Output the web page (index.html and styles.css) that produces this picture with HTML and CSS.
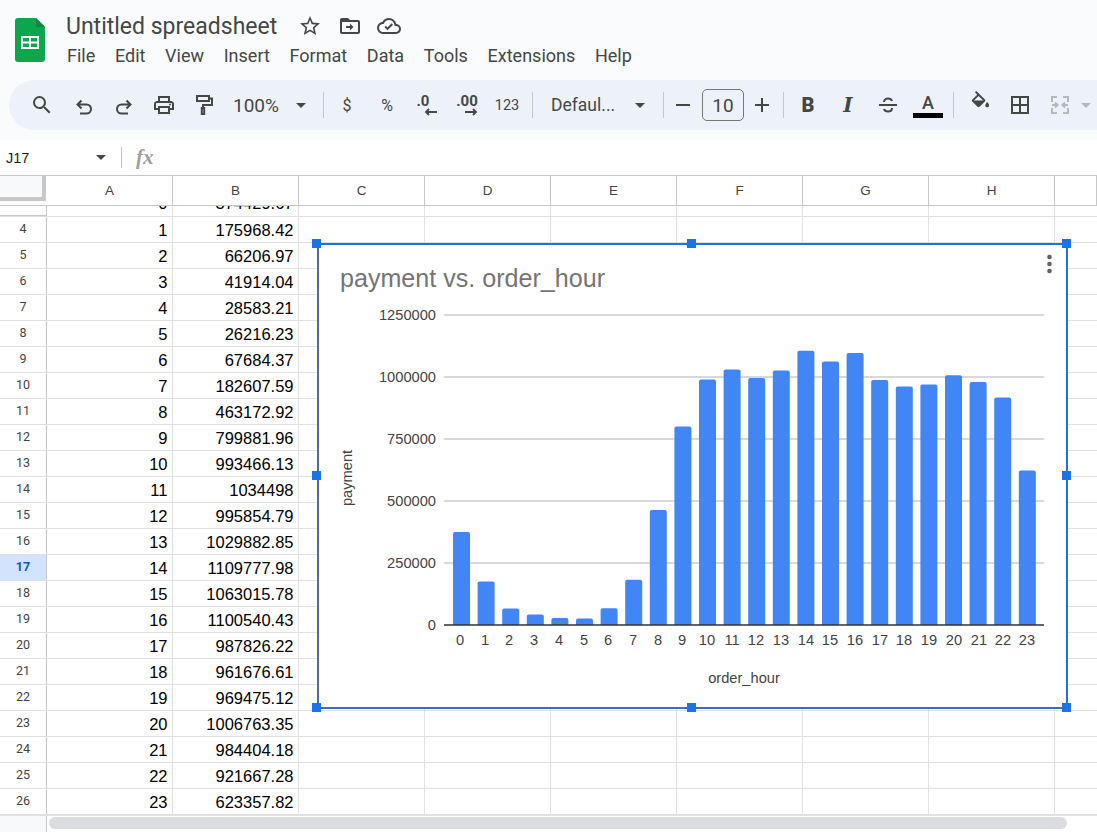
FILE: index.html
```html
<!DOCTYPE html>
<html lang="en">
<head>
  <meta charset="UTF-8" />
  <title>Untitled spreadsheet</title>
  <link rel="stylesheet" href="styles.css">
</head>
<body>
  <header class="top">
    <svg class="logo" viewBox="0 0 30 44" width="30" height="44">
      <path d="M3 0h18l9 9v32a3 3 0 0 1-3 3H3a3 3 0 0 1-3-3V3a3 3 0 0 1 3-3z" fill="#0ca74d"/>
      <path d="M21 0l9 9h-9z" fill="#0a8a3f"/>
      <path d="M6 18h18v13H6z" fill="#fff"/>
      <path d="M8 20h6v3.500H8zM16 20h6v3.500h-6zM8 25.500h6V29H8zM16 25.500h6V29h-6z" fill="#0ca74d"/>
    </svg>
    <div class="doc">
      <div class="title-row">
        <span class="doc-title">Untitled spreadsheet</span>
        <svg class="title-icon" viewBox="0 0 24 24"><path d="M22 9.240l-7.190-.62L12 2 9.190 8.630 2 9.240l5.460 4.730L5.820 21 12 17.270 18.180 21l-1.630-7.030L22 9.240zM12 15.400l-3.760 2.270 1-4.280-3.320-2.880 4.380-.38L12 6.100l1.710 4.040 4.380.38-3.320 2.880 1 4.280L12 15.400z"/></svg>
        <svg class="title-icon" viewBox="0 0 24 24"><path d="M20 6h-8l-2-2H4c-1.100 0-2 .9-2 2v12c0 1.100.9 2 2 2h16c1.100 0 2-.9 2-2V8c0-1.100-.9-2-2-2zm0 12H4V8h16v10z"/><path d="M12 9.500l3.500 3.500-3.500 3.500v-2.500H8v-2h4z"/></svg>
        <svg class="title-icon" viewBox="0 0 24 24"><path d="M19.350 10.040A7.490 7.490 0 0 0 12 4a7.490 7.490 0 0 0-6.650 4.040A5.994 5.994 0 0 0 0 14a6 6 0 0 0 6 6h13a5 5 0 0 0 5-5c0-2.640-2.050-4.780-4.650-4.960zM19 18H6c-2.210 0-4-1.790-4-4 0-2.050 1.530-3.760 3.560-3.970l1.070-.11.500-.95A5.469 5.469 0 0 1 12 6c2.620 0 4.880 1.860 5.390 4.430l.3 1.500 1.530.11A2.980 2.980 0 0 1 22 15c0 1.650-1.350 3-3 3z"/><path d="M10.500 16.200l-3-3 1.400-1.400 1.600 1.600 4.100-4.100 1.400 1.400z"/></svg>
      </div>
      <nav class="menu">
        <span>File</span><span>Edit</span><span>View</span><span>Insert</span><span>Format</span><span>Data</span><span>Tools</span><span>Extensions</span><span>Help</span>
      </nav>
    </div>
  </header>

  <div class="toolbar-wrap">
    <div class="toolbar">
      <span class="tool first"><svg viewBox="0 0 24 24"><path d="M15.500 14h-.79l-.28-.27A6.470 6.470 0 0 0 16 9.500 6.500 6.500 0 1 0 9.500 16c1.610 0 3.090-.59 4.230-1.570l.27.28v.79l5 4.990L20.490 19l-4.990-5zm-6 0C7.010 14 5 11.990 5 9.500S7.010 5 9.500 5 14 7.010 14 9.500 11.990 14 9.500 14z"/></svg></span>
      <span class="tool low"><svg viewBox="0 0 24 24" class="line"><path d="M9.500 5.500L5.500 9.500l4 4M5.500 9.500h9a4.500 4.500 0 0 1 0 9H8"/></svg></span>
      <span class="tool low"><svg viewBox="0 0 24 24" class="line"><path d="M14.500 5.500l4 4-4 4M18.500 9.500h-9a4.500 4.500 0 0 0 0 9H16"/></svg></span>
      <span class="tool"><svg viewBox="0 0 24 24"><path d="M19 8h-1V3H6v5H5c-1.660 0-3 1.340-3 3v6h4v4h12v-4h4v-6c0-1.660-1.340-3-3-3zM8 5h8v3H8V5zm8 12v2H8v-4h8v2zm2-2v-2H6v2H4v-4c0-.55.45-1 1-1h14c.55 0 1 .45 1 1v4h-2z"/><circle cx="18" cy="11.500" r="1"/></svg></span>
      <span class="tool"><svg viewBox="0 0 24 24" class="line"><path d="M5 3h12v5H5zM17 5.500h3V12h-9v3"/><path d="M9.800 15h2.400v6H9.800z"/></svg></span>
      <span class="select zoom-select"><span>100%</span><i class="caret"></i></span>
      <i class="sep"></i>
      <span class="tool text dollar">$</span>
      <span class="tool text">%</span>
      <span class="tool decimal dec-less"><b>.0</b><svg viewBox="0 0 14 8" class="line thin"><path d="M13 4H2M5 1L2 4l3 3"/></svg></span>
      <span class="tool decimal"><b>.00</b><svg viewBox="0 0 14 8" class="line thin"><path d="M1 4h11M9 1l3 3-3 3"/></svg></span>
      <span class="tool text small">123</span>
      <i class="sep"></i>
      <span class="select font-select"><span>Defaul...</span><i class="caret"></i></span>
      <i class="sep"></i>
      <span class="tool narrow"><i class="dash"></i></span>
      <span class="size-box">10</span>
      <span class="tool narrow"><i class="dash"></i><i class="dash upright"></i></span>
      <i class="sep wide"></i>
      <span class="tool glyph-b">B</span>
      <span class="tool glyph-i">I</span>
      <span class="tool"><svg viewBox="0 0 24 24" class="line"><path d="M8 9c0-2 1.800-3.500 4-3.500s3.500 1 4 2.500M16 15c0 2.200-1.800 3.500-4 3.500S8.500 17.500 8 16M3 12h18"/></svg></span>
      <span class="tool color-a"><span>A</span><i class="swatch black"></i></span>
      <i class="sep tight"></i>
      <span class="tool bucket"><svg viewBox="0 0 24 24"><path fill-rule="evenodd" d="M16.560 8.940L7.620 0 6.210 1.410l2.380 2.380-5.150 5.150c-.59.59-.59 1.540 0 2.120l5.500 5.500c.29.29.68.44 1.060.44s.77-.15 1.060-.44l5.500-5.500c.59-.58.59-1.530 0-2.120zM5.210 10L10 5.210 14.790 10H5.210z"/><path d="M19 11.500s-2 2.170-2 3.500c0 1.100.9 2 2 2s2-.9 2-2c0-1.330-2-3.500-2-3.500z"/></svg><i class="swatch white"></i></span>
      <span class="tool"><svg viewBox="0 0 24 24"><path d="M3 3v18h18V3H3zm8 16H5v-6h6v6zm0-8H5V5h6v6zm8 8h-6v-6h6v6zm0-8h-6V5h6v6z"/></svg></span>
      <span class="tool off"><svg viewBox="0 0 24 24" class="line"><path d="M9 4H4v5M4 15v5h5M15 4h5v5M20 15v5h-5M4 12h5M7 9.500L9.500 12 7 14.500M20 12h-5M17 9.500L14.500 12l2.500 2.500"/></svg></span>
      <i class="caret off-caret"></i>
    </div>
  </div>

  <div class="formula-bar">
    <span class="name-box">J17</span><i class="caret"></i>
    <i class="fx-sep"></i>
    <span class="fx">fx</span>
  </div>

  <main class="sheet">
    <div class="col-heads">
      <div class="corner"></div>
      <div class="col-head">A</div><div class="col-head">B</div><div class="col-head">C</div><div class="col-head">D</div><div class="col-head">E</div><div class="col-head">F</div><div class="col-head">G</div><div class="col-head">H</div><div class="col-head"></div>
    </div>

    <div class="row clipped"><div class="rh">3</div><div class="cell">0</div><div class="cell">374429.67</div><div class="rest"></div></div>
    <div class="row"><div class="rh">4</div><div class="cell">1</div><div class="cell">175968.42</div><div class="rest"></div></div>
    <div class="row"><div class="rh">5</div><div class="cell">2</div><div class="cell">66206.97</div><div class="rest"></div></div>
    <div class="row"><div class="rh">6</div><div class="cell">3</div><div class="cell">41914.04</div><div class="rest"></div></div>
    <div class="row"><div class="rh">7</div><div class="cell">4</div><div class="cell">28583.21</div><div class="rest"></div></div>
    <div class="row"><div class="rh">8</div><div class="cell">5</div><div class="cell">26216.23</div><div class="rest"></div></div>
    <div class="row"><div class="rh">9</div><div class="cell">6</div><div class="cell">67684.37</div><div class="rest"></div></div>
    <div class="row"><div class="rh">10</div><div class="cell">7</div><div class="cell">182607.59</div><div class="rest"></div></div>
    <div class="row"><div class="rh">11</div><div class="cell">8</div><div class="cell">463172.92</div><div class="rest"></div></div>
    <div class="row"><div class="rh">12</div><div class="cell">9</div><div class="cell">799881.96</div><div class="rest"></div></div>
    <div class="row"><div class="rh">13</div><div class="cell">10</div><div class="cell">993466.13</div><div class="rest"></div></div>
    <div class="row"><div class="rh">14</div><div class="cell">11</div><div class="cell">1034498</div><div class="rest"></div></div>
    <div class="row"><div class="rh">15</div><div class="cell">12</div><div class="cell">995854.79</div><div class="rest"></div></div>
    <div class="row"><div class="rh">16</div><div class="cell">13</div><div class="cell">1029882.85</div><div class="rest"></div></div>
    <div class="row"><div class="rh active">17</div><div class="cell">14</div><div class="cell">1109777.98</div><div class="rest"></div></div>
    <div class="row"><div class="rh">18</div><div class="cell">15</div><div class="cell">1063015.78</div><div class="rest"></div></div>
    <div class="row"><div class="rh">19</div><div class="cell">16</div><div class="cell">1100540.43</div><div class="rest"></div></div>
    <div class="row"><div class="rh">20</div><div class="cell">17</div><div class="cell">987826.22</div><div class="rest"></div></div>
    <div class="row"><div class="rh">21</div><div class="cell">18</div><div class="cell">961676.61</div><div class="rest"></div></div>
    <div class="row"><div class="rh">22</div><div class="cell">19</div><div class="cell">969475.12</div><div class="rest"></div></div>
    <div class="row"><div class="rh">23</div><div class="cell">20</div><div class="cell">1006763.35</div><div class="rest"></div></div>
    <div class="row"><div class="rh">24</div><div class="cell">21</div><div class="cell">984404.18</div><div class="rest"></div></div>
    <div class="row"><div class="rh">25</div><div class="cell">22</div><div class="cell">921667.28</div><div class="rest"></div></div>
    <div class="row"><div class="rh">26</div><div class="cell">23</div><div class="cell">623357.82</div><div class="rest"></div></div>

    <div class="scroll-row">
      <div class="scroll-corner"></div>
      <div class="thumb"></div>
    </div>

    <!-- chart floats over the grid -->
    <div class="chart">
      <svg class="chart-svg" viewBox="317 243 751 466" width="751" height="466">
        <defs><clipPath id="plot"><rect x="440" y="300" width="610" height="325"/></clipPath></defs>
        <text class="chart-title" x="340" y="287">payment vs. order_hour</text>
        <g class="grid">
          <path d="M444 315H1044M444 377H1044M444 439H1044M444 501H1044M444 563H1044"/>
        </g>
        <g class="ylabels">
          <text x="436" y="320">1250000</text>
          <text x="436" y="382">1000000</text>
          <text x="436" y="444">750000</text>
          <text x="436" y="506">500000</text>
          <text x="436" y="568">250000</text>
          <text x="436" y="630">0</text>
        </g>
        <g class="bars" clip-path="url(#plot)">
          <rect x="453" y="532" width="17" height="95"/>
          <rect x="477.600" y="581.400" width="17" height="46"/>
          <rect x="502.200" y="608.600" width="17" height="19"/>
          <rect x="526.800" y="614.600" width="17" height="13"/>
          <rect x="551.400" y="617.900" width="17" height="10"/>
          <rect x="576" y="618.500" width="17" height="9"/>
          <rect x="600.600" y="608.200" width="17" height="19"/>
          <rect x="625.200" y="579.700" width="17" height="48"/>
          <rect x="649.800" y="510.100" width="17" height="117"/>
          <rect x="674.400" y="426.600" width="17" height="201"/>
          <rect x="699" y="379.600" width="17" height="248"/>
          <rect x="723.600" y="369.400" width="17" height="258"/>
          <rect x="748.200" y="378" width="17" height="249"/>
          <rect x="772.800" y="370.600" width="17" height="257"/>
          <rect x="797.400" y="350.800" width="17" height="277"/>
          <rect x="822" y="361.400" width="17" height="266"/>
          <rect x="846.600" y="353.100" width="17" height="274"/>
          <rect x="871.200" y="380" width="17" height="247"/>
          <rect x="895.800" y="386.500" width="17" height="241"/>
          <rect x="920.400" y="384.600" width="17" height="243"/>
          <rect x="945" y="375.300" width="17" height="252"/>
          <rect x="969.600" y="381.900" width="17" height="246"/>
          <rect x="994.200" y="397.400" width="17" height="230"/>
          <rect x="1018.800" y="470.400" width="17" height="157"/>
        </g>
        <path class="baseline" d="M444 625H1044"/>
        <g class="xlabels">
          <text x="460" y="645">0</text><text x="485" y="645">1</text><text x="509" y="645">2</text><text x="534" y="645">3</text>
          <text x="559" y="645">4</text><text x="584" y="645">5</text><text x="608" y="645">6</text><text x="633" y="645">7</text>
          <text x="658" y="645">8</text><text x="682" y="645">9</text><text x="707" y="645">10</text><text x="732" y="645">11</text>
          <text x="756" y="645">12</text><text x="781" y="645">13</text><text x="806" y="645">14</text><text x="830" y="645">15</text>
          <text x="855" y="645">16</text><text x="880" y="645">17</text><text x="904" y="645">18</text><text x="929" y="645">19</text>
          <text x="954" y="645">20</text><text x="979" y="645">21</text><text x="1003" y="645">22</text><text x="1027" y="645">23</text>
          <text x="744" y="683">order_hour</text>
          <text transform="translate(352 478) rotate(-90)">payment</text>
        </g>
        <g class="kebab"><circle cx="1049.500" cy="257" r="2.300"/><circle cx="1049.500" cy="264" r="2.300"/><circle cx="1049.500" cy="271" r="2.300"/></g>
      </svg>
      <i class="handle h-tl"></i><i class="handle h-tc"></i><i class="handle h-tr"></i>
      <i class="handle h-ml"></i><i class="handle h-mr"></i>
      <i class="handle h-bl"></i><i class="handle h-bc"></i><i class="handle h-br"></i>
    </div>
  </main>
</body>
</html>
```

FILE: styles.css
```css
* {
  margin: 0;
  padding: 0;
  box-sizing: border-box;
}

html, body {
  height: 100%;
  overflow: hidden;
}

body {
  font-family: Roboto, 'Liberation Sans', sans-serif;
  color: #444746;
  background: #fff;
}

i { display: block; font-style: normal; }

/* header */
.top {
  height: 80px;
  background: #f9fbfd;
  display: flex;
  padding: 18px 0 0 15px;
}

.logo { flex: none; }

.doc {
  margin-left: 21px;
  margin-top: -7px;
}

.title-row {
  display: flex;
  align-items: center;
  height: 30px;
}

.doc-title {
  font-size: 23px;
  width: 232px;
  white-space: nowrap;
}

.title-icon {
  width: 24px;
  height: 24px;
  margin-right: 15.500px;
  fill: #444746;
}

.menu {
  display: flex;
  gap: 19.700px;
  font-size: 18px;
  margin-top: 1px;
  height: 26px;
  align-items: center;
  padding-left: 1px;
}

/* toolbar */
.toolbar-wrap {
  background: #f9fbfd;
  padding-left: 9px;
  height: 60px;
}

.toolbar {
  height: 50px;
  background: #edf2fa;
  border-radius: 25px 0 0 25px;
  display: flex;
  align-items: center;
  padding-left: 13px;
  overflow: hidden;
}

.tool {
  flex: none;
  width: 40px;
  height: 40px;
  display: flex;
  align-items: center;
  justify-content: center;
  position: relative;
}

.tool.first { margin-right: 2px; }
.tool.low svg { margin-top: 3px; }
.tool.narrow { width: 32px; }

.tool svg {
  width: 24px;
  height: 24px;
  fill: #444746;
}

.tool svg.line {
  fill: none;
  stroke: #444746;
  stroke-width: 2;
}

.tool.off svg.line { stroke: #b5b7b9; }

.tool.text { font-size: 16px; }
.tool.text.small { font-size: 14.500px; }

.decimal { flex-direction: column; }

.decimal b {
  font-size: 15px;
  font-weight: 700;
  line-height: 15px;
}

.dec-less b { margin-right: 8px; }

.decimal svg.thin {
  width: 14px;
  height: 8px;
  margin: -1px 0 0 8px;
  stroke-width: 1.800;
}

.select {
  flex: none;
  display: flex;
  align-items: center;
  font-size: 19px;
}

.zoom-select { width: 94px; padding-left: 9px; }
.zoom-select span { width: 63px; }
.font-select { width: 122px; padding-left: 15px; font-size: 17.500px; }
.font-select span { width: 84px; }

.caret {
  flex: none;
  width: 0;
  height: 0;
  border-left: 5.500px solid transparent;
  border-right: 5.500px solid transparent;
  border-top: 5.500px solid #444746;
}

.sep {
  flex: none;
  width: 1px;
  height: 26px;
  background: #c7c7c7;
  margin: 0 3px 0 5px;
}

.sep.wide { margin: 0 4px 0 5px; }
.sep.tight { margin: 0 6px 0 5px; }

.dash {
  width: 14px;
  height: 2px;
  background: #444746;
}

.dash.upright {
  position: absolute;
  transform: rotate(90deg);
}

.size-box {
  flex: none;
  width: 42px;
  height: 32px;
  margin: 0 2px 0 3px;
  border: 1px solid #747775;
  border-radius: 5px;
  display: flex;
  align-items: center;
  justify-content: center;
  font-size: 19px;
}

.glyph-b {
  font-size: 20px;
  font-weight: 900;
}

.glyph-i {
  font-family: 'DejaVu Serif', serif;
  font-style: italic;
  font-weight: 700;
  font-size: 20px;
}

.color-a {
  font-size: 18px;
  font-weight: 500;
  flex-direction: column;
}

.color-a span { line-height: 20px; margin-top: -5px; }

.swatch {
  position: absolute;
  left: 5px;
  bottom: 7px;
  width: 30px;
  height: 5px;
}

.swatch.black { background: #000; }
.swatch.white { left: 4px; width: 29px; }
.bucket svg { margin-top: -6px; width: 23px; height: 23px; }

.off-caret {
  border-top-color: #b5b7b9;
  margin-left: 1px;
}

/* formula bar */
.formula-bar {
  height: 36px;
  background: #fff;
  display: flex;
  align-items: center;
  padding-left: 6px;
  border-bottom: 1px solid #c7c7c7;
}

.name-box {
  width: 90px;
  font-family: 'Liberation Sans', sans-serif;
  font-size: 14.500px;
  color: #222;
}

.fx-sep {
  width: 1px;
  height: 21px;
  background: #c7c7c7;
  margin: 0 14px 0 15px;
}

.fx {
  font-family: 'Liberation Serif', serif;
  font-style: italic;
  font-weight: 700;
  font-size: 21px;
  color: #a0a0a0;
}

/* grid */
.sheet {
  position: relative;
}

.col-heads {
  display: grid;
  grid-template-columns: 47px repeat(8, 126px) 1fr;
  height: 30px;
  border-bottom: 1px solid #c7c7c7;
}

.corner {
  background: #f8f9fa;
  border-right: 4px solid #c7c7c7;
  border-bottom: 4px solid #c7c7c7;
  margin-right: 1px;
  height: 25px;
}

.col-head {
  font-family: 'Liberation Sans', sans-serif;
  font-size: 13.500px;
  line-height: 29px;
  text-align: center;
  color: #444;
  border-right: 1px solid #c7c7c7;
}

.row {
  display: grid;
  grid-template-columns: 47px 126px 126px 1fr;
  height: 26px;
  border-bottom: 1px solid #e1e1e1;
  overflow: hidden;
}

.row.clipped { height: 11px; }
.row.clipped > * { height: 26px; margin-top: -16px; }

.rh {
  font-size: 12.500px;
  text-align: center;
  line-height: 23px;
  color: #444;
  border-right: 1px solid #c7c7c7;
  border-bottom: 1px solid #c7c7c7;
  height: 26px;
}

.rh.active {
  background: #d3e3fd;
  color: #0b57d0;
  font-weight: 700;
}

.cell {
  font-family: 'Liberation Sans', sans-serif;
  font-size: 16.500px;
  line-height: 27px;
  color: #000;
  text-align: right;
  padding-right: 4.500px;
  border-right: 1px solid #e1e1e1;
}

.rest {
  background: repeating-linear-gradient(to right, transparent 0 125px, #e1e1e1 125px 126px);
}

.scroll-row {
  height: 17px;
  display: flex;
  border-top: 1px solid #e1e1e1;
}

.scroll-corner {
  width: 47px;
  background: #f8f9fa;
  border-right: 1px solid #c7c7c7;
  height: 16px;
}

.thumb {
  width: 1018px;
  height: 12px;
  margin: 1px 0 0 2px;
  border-radius: 6px;
  background: #dadce0;
}

/* chart */
.chart {
  position: absolute;
  left: 317px;
  top: 67px;
  width: 751px;
  height: 466px;
  background: #fff;
  border-top: 2px solid #1a73e8;
  border-right: 2px solid #1a73e8;
  border-left: 2px solid #4a6f9f;
  border-bottom: 2px solid #3c6fb5;
}

.chart-svg {
  position: absolute;
  left: -2px;
  top: -2px;
}

.chart-svg text {
  font-family: 'Liberation Sans', sans-serif;
  font-size: 14.670px;
  fill: #444;
}

.chart-svg .chart-title {
  font-size: 25.100px;
  fill: #757575;
}

.grid path {
  stroke: #d9d9d9;
  stroke-width: 2;
  fill: none;
}

.ylabels text { text-anchor: end; }
.xlabels text { text-anchor: middle; }
.bars rect { fill: #4285f4; rx: 2px; }

.baseline {
  stroke: #333;
  stroke-width: 1.500;
  fill: none;
}

.kebab circle { fill: #5f6368; }

.handle {
  position: absolute;
  width: 9px;
  height: 9px;
  background: #1a73e8;
}

.h-tl { left: -7px; top: -6px; }
.h-tc { left: 368px; top: -6px; }
.h-tr { right: -5px; top: -6px; }
.h-ml { left: -7px; top: 226px; }
.h-mr { right: -5px; top: 226px; }
.h-bl { left: -7px; bottom: -5px; }
.h-bc { left: 368px; bottom: -5px; }
.h-br { right: -5px; bottom: -5px; }
```
